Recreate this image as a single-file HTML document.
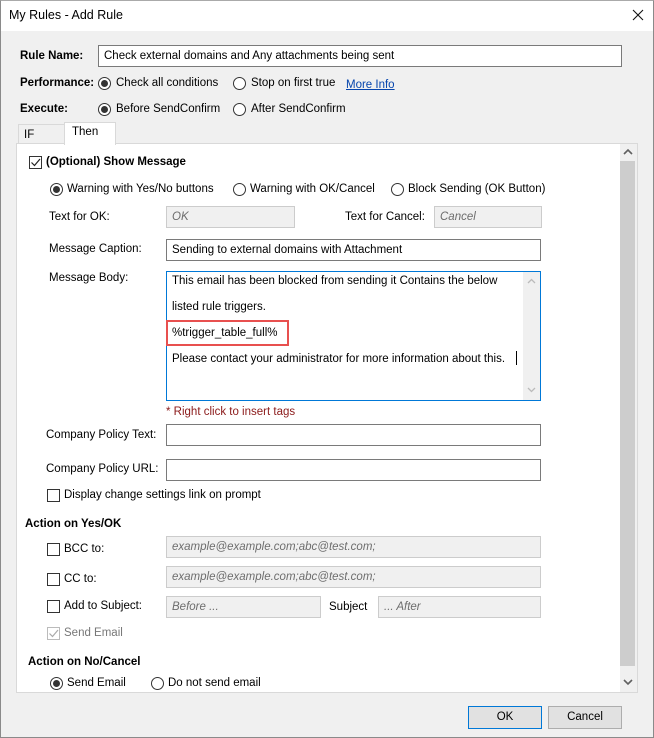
<!DOCTYPE html>
<html><head><meta charset="utf-8"><style>
*{box-sizing:border-box;margin:0;padding:0}
body{width:654px;height:738px;background:#f0f0f0;font-family:"Liberation Sans",sans-serif;font-size:11.5px;color:#000;position:relative;overflow:hidden}
.a{position:absolute;white-space:nowrap}
.t{position:absolute;white-space:nowrap;line-height:14px}
.b{font-weight:bold}
.in{position:absolute;background:#fff;border:1px solid #7a7a7a;height:22px;padding:3px 5px;line-height:14px}
.dis{background:#f0f0f0;border-color:#ccc;color:#6d6d6d;font-style:italic}
.rad{position:absolute;width:13px;height:13px;border:1px solid #333;border-radius:50%;background:#fff}
.rad.on::after{content:"";position:absolute;left:2px;top:2px;width:7px;height:7px;border-radius:50%;background:#333}
.cb{position:absolute;width:13px;height:13px;border:1px solid #333;background:#fff}
.btn{position:absolute;height:23px;width:74px;background:#e1e1e1;border:1px solid #adadad;text-align:center;line-height:21px}
</style></head><body>
<div class="a" style="left:0;top:0;width:654px;height:738px;border:1px solid #8a8a8a;border-top-color:#aaa"></div>
<div class="a" style="left:1px;top:1px;width:652px;height:30px;background:#fff"></div>
<div class="t" style="left:9px;top:8px;font-size:12.5px">My Rules - Add Rule</div>
<svg class="a" style="left:632px;top:9px" width="12" height="12"><path d="M1 1L11 11M11 1L1 11" stroke="#111" stroke-width="1.1"/></svg>

<div class="t b" style="left:20px;top:49px">Rule Name:</div>
<div class="in" style="left:98px;top:45px;width:524px">Check external domains and Any attachments being sent</div>
<div class="t b" style="left:20px;top:76px">Performance:</div>
<div class="rad on" style="left:98px;top:77px"></div><div class="t" style="left:116px;top:76px">Check all conditions</div>
<div class="rad" style="left:233px;top:77px"></div><div class="t" style="left:251px;top:76px">Stop on first true</div>
<div class="t" style="left:346px;top:78px;color:#0645ad;text-decoration:underline">More Info</div>
<div class="t b" style="left:20px;top:102px">Execute:</div>
<div class="rad on" style="left:98px;top:103px"></div><div class="t" style="left:116px;top:102px">Before SendConfirm</div>
<div class="rad" style="left:233px;top:103px"></div><div class="t" style="left:251px;top:102px">After SendConfirm</div>

<div class="a" style="left:18px;top:124px;width:47px;height:20px;border:1px solid #d9d9d9;border-bottom:none;background:#f0f0f0"></div>
<div class="t" style="left:24px;top:128px">IF</div>
<div class="a" style="left:64px;top:122px;width:52px;height:23px;border:1px solid #d9d9d9;border-bottom:none;background:#fff;z-index:2"></div>
<div class="t" style="left:72px;top:125px;z-index:3">Then</div>

<div class="a" style="left:16px;top:143px;width:622px;height:550px;border:1px solid #d9d9d9;background:#fff"></div>
<div class="a" style="left:620px;top:144px;width:17px;height:548px;background:#f0f0f0"></div>
<div class="a" style="left:620px;top:161px;width:15px;height:505px;background:#cdcdcd"></div>
<svg class="a" style="left:623px;top:148px" width="10" height="8"><path d="M1 6L5 2L9 6" stroke="#606060" stroke-width="1.6" fill="none"/></svg>
<svg class="a" style="left:623px;top:678px" width="10" height="8"><path d="M1 2L5 6L9 2" stroke="#606060" stroke-width="1.6" fill="none"/></svg>

<div class="cb" style="left:29px;top:156px"></div>
<svg class="a" style="left:30px;top:157px" width="11" height="11"><path d="M1.5 5.5L4.5 8.5L10 2" stroke="#222" stroke-width="1.2" fill="none"/></svg>
<div class="t b" style="left:46px;top:155px">(Optional) Show Message</div>
<div class="rad on" style="left:50px;top:183px"></div><div class="t" style="left:67px;top:182px">Warning with Yes/No buttons</div>
<div class="rad" style="left:233px;top:183px"></div><div class="t" style="left:250px;top:182px">Warning with OK/Cancel</div>
<div class="rad" style="left:391px;top:183px"></div><div class="t" style="left:408px;top:182px">Block Sending (OK Button)</div>

<div class="t" style="left:49px;top:210px">Text for OK:</div>
<div class="in dis" style="left:166px;top:206px;width:129px">OK</div>
<div class="t" style="left:345px;top:210px">Text for Cancel:</div>
<div class="in dis" style="left:434px;top:206px;width:108px">Cancel</div>

<div class="t" style="left:49px;top:242px">Message Caption:</div>
<div class="in" style="left:166px;top:239px;width:375px">Sending to external domains with Attachment</div>

<div class="t" style="left:49px;top:271px">Message Body:</div>
<div class="a" style="left:166px;top:271px;width:375px;height:130px;border:1px solid #0078d7;background:#fff"></div>
<div class="a" style="left:523px;top:272px;width:17px;height:128px;background:#f0f0f0"></div>
<svg class="a" style="left:527px;top:278px" width="9" height="7"><path d="M1 5L4.5 1.5L8 5" stroke="#bbb" stroke-width="1.3" fill="none"/></svg>
<svg class="a" style="left:527px;top:386px" width="9" height="7"><path d="M1 2L4.5 5.5L8 2" stroke="#bbb" stroke-width="1.3" fill="none"/></svg>
<div class="t" style="left:172px;top:274px">This email has been blocked from sending it Contains the below</div>
<div class="t" style="left:172px;top:300px">listed rule triggers.</div>
<div class="a" style="left:166px;top:320px;width:123px;height:26px;border:2px solid #e8504f"></div>
<div class="t" style="left:172px;top:326px">%trigger_table_full%</div>
<div class="t" style="left:172px;top:352px">Please contact your administrator for more information about this.</div>
<div class="a" style="left:516px;top:351px;width:1px;height:14px;background:#000"></div>

<div class="t" style="left:166px;top:405px;color:#8b1a1a">* Right click to insert tags</div>
<div class="t" style="left:46px;top:428px">Company Policy Text:</div>
<div class="in" style="left:166px;top:424px;width:375px"></div>
<div class="t" style="left:46px;top:462px">Company Policy URL:</div>
<div class="in" style="left:166px;top:459px;width:375px"></div>
<div class="cb" style="left:47px;top:489px"></div><div class="t" style="left:64px;top:488px">Display change settings link on prompt</div>

<div class="t b" style="left:25px;top:517px">Action on Yes/OK</div>
<div class="cb" style="left:47px;top:543px"></div><div class="t" style="left:64px;top:542px">BCC to:</div>
<div class="in dis" style="left:166px;top:536px;width:375px">example@example.com;abc@test.com;</div>
<div class="cb" style="left:47px;top:573px"></div><div class="t" style="left:64px;top:572px">CC to:</div>
<div class="in dis" style="left:166px;top:566px;width:375px">example@example.com;abc@test.com;</div>
<div class="cb" style="left:47px;top:600px"></div><div class="t" style="left:64px;top:599px">Add to Subject:</div>
<div class="in dis" style="left:166px;top:596px;width:155px">Before ...</div>
<div class="t" style="left:329px;top:600px">Subject</div>
<div class="in dis" style="left:378px;top:596px;width:163px">... After</div>
<div class="cb" style="left:47px;top:627px;border-color:#bbb"></div>
<svg class="a" style="left:48px;top:628px" width="11" height="11"><path d="M1.5 5.5L4.5 8.5L10 2" stroke="#aaa" stroke-width="1.2" fill="none"/></svg>
<div class="t" style="left:64px;top:626px;color:#777">Send Email</div>

<div class="t b" style="left:28px;top:655px">Action on No/Cancel</div>
<div class="rad on" style="left:50px;top:677px"></div><div class="t" style="left:67px;top:676px">Send Email</div>
<div class="rad" style="left:151px;top:677px"></div><div class="t" style="left:168px;top:676px">Do not send email</div>

<div class="btn" style="left:468px;top:706px;border-color:#0078d7">OK</div>
<div class="btn" style="left:548px;top:706px">Cancel</div>
</body></html>
